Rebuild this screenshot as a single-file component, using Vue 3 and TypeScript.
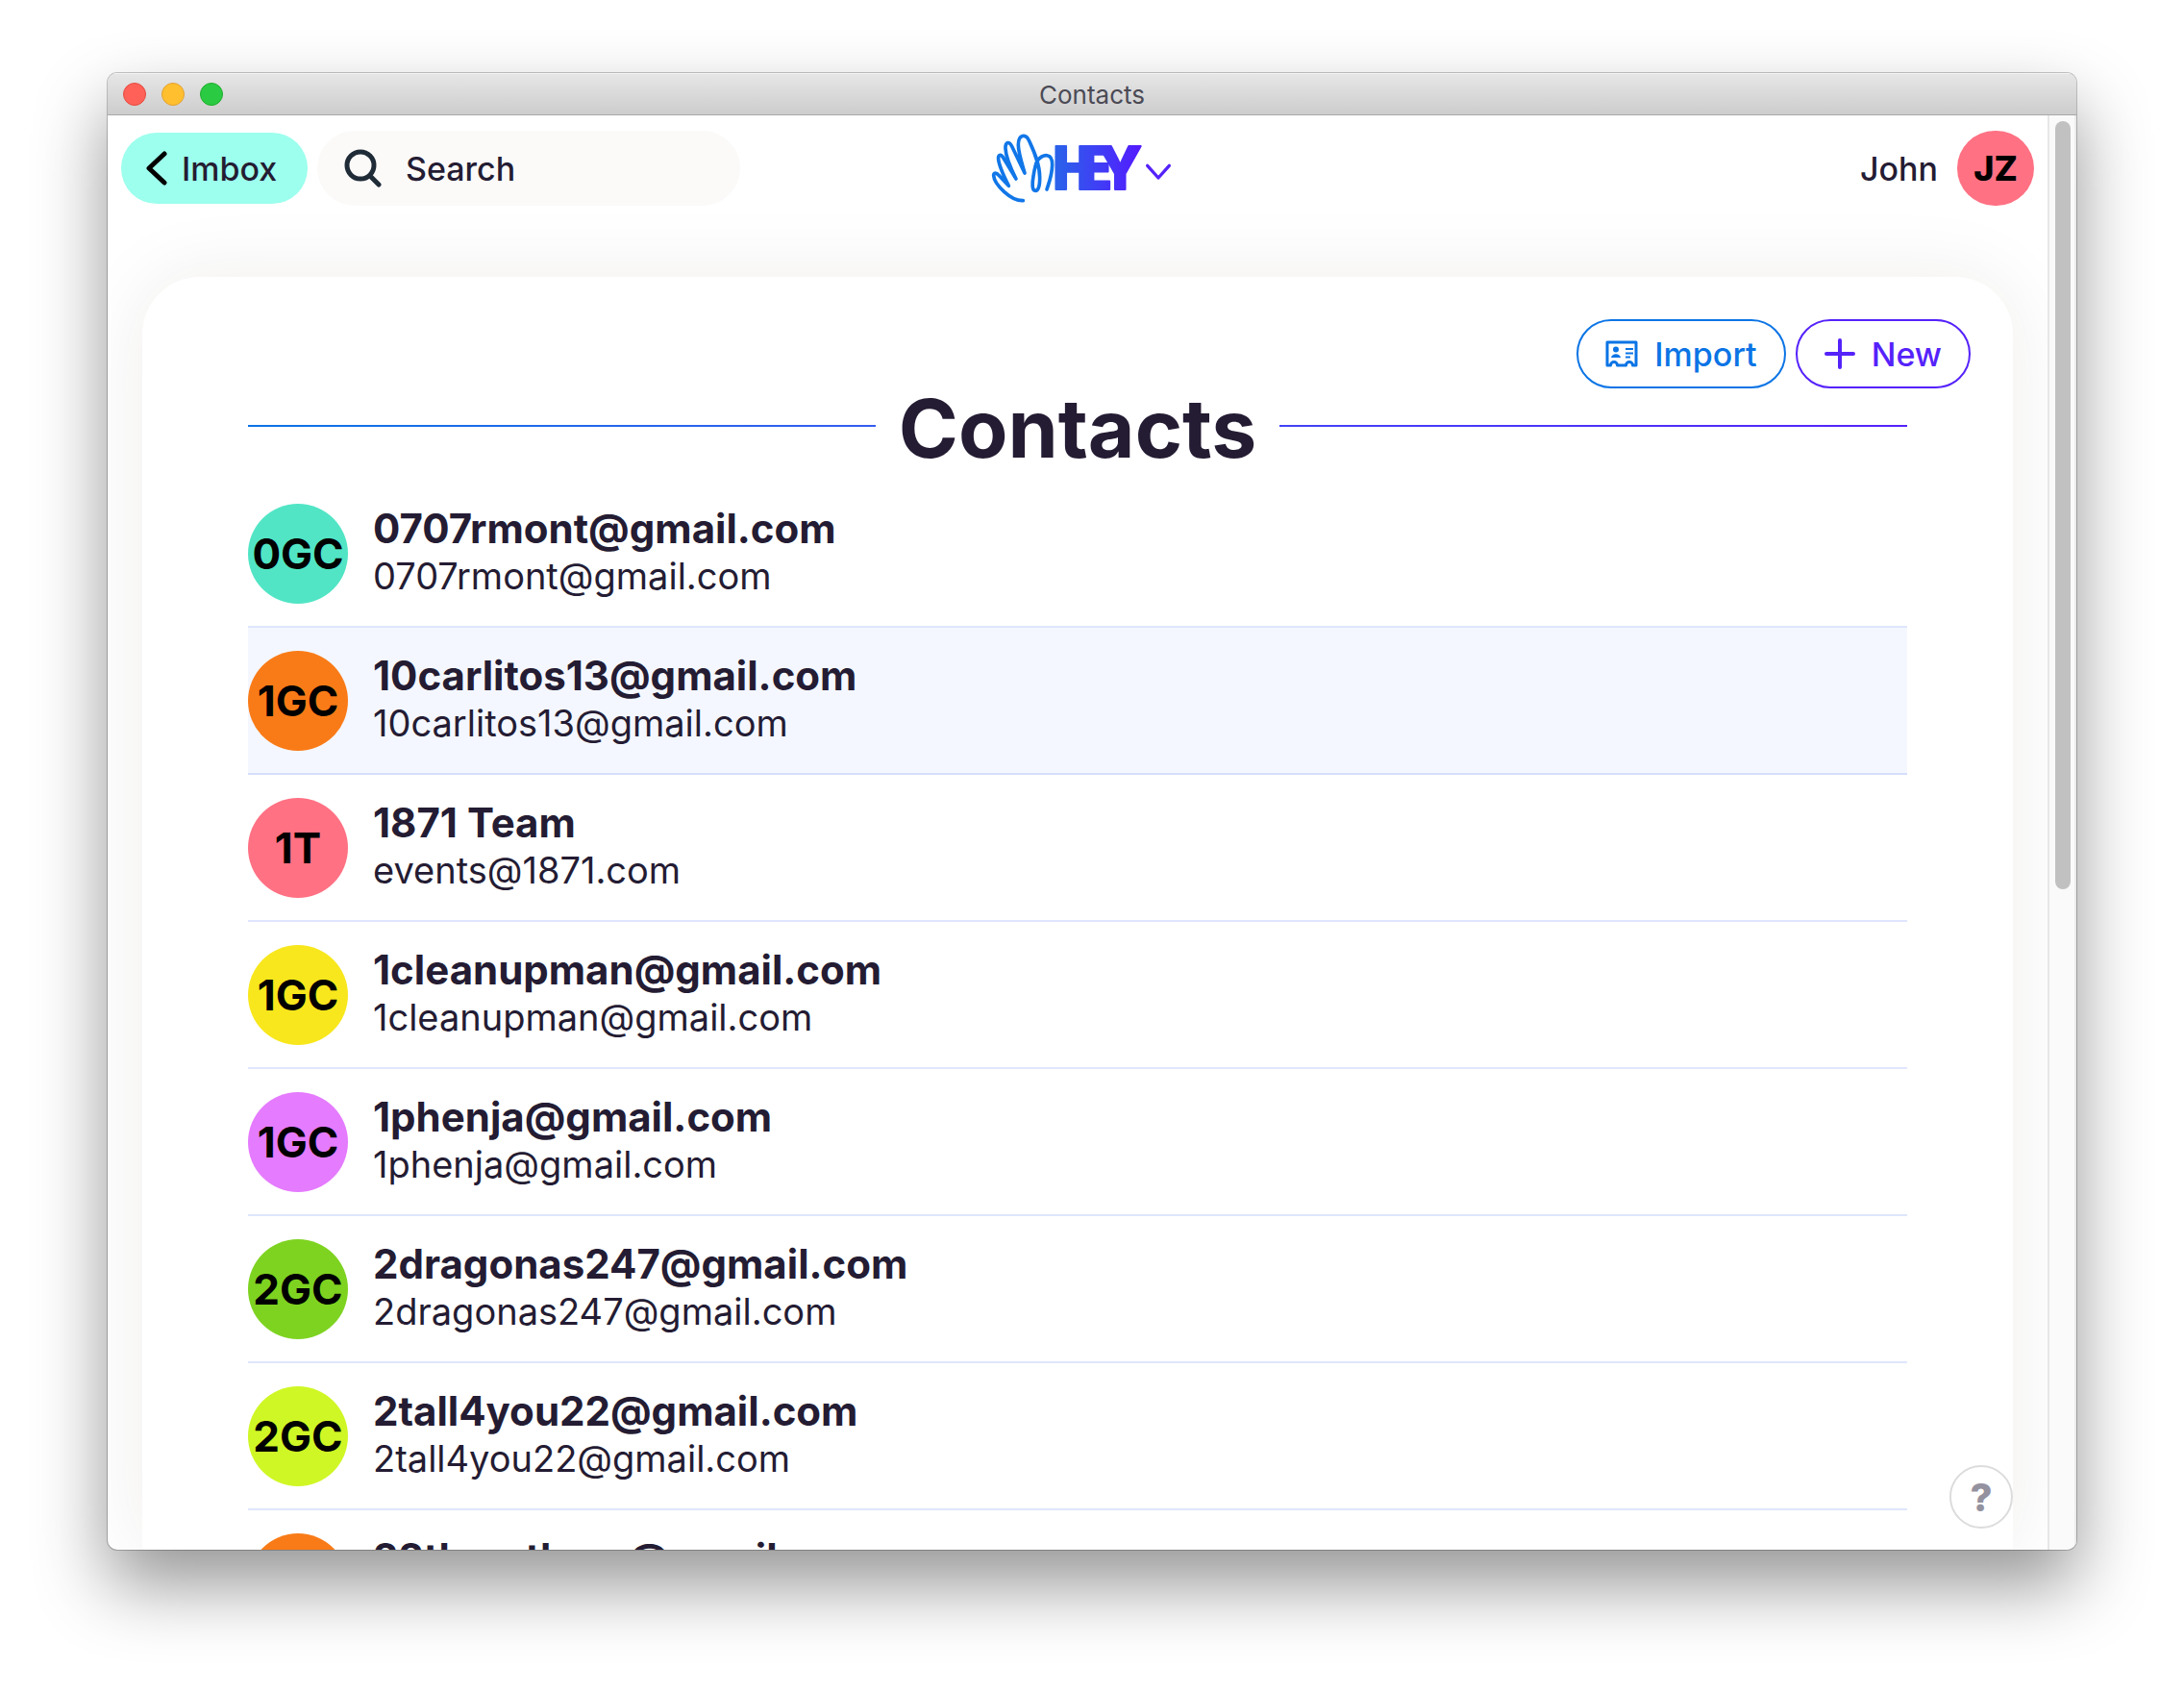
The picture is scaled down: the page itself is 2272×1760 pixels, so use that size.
<script setup lang="ts">
interface Contact {
  initials: string
  color: string
  name: string
  email: string
  active?: boolean
}

const contacts: Contact[] = [
  { initials: '0GC', color: '#51e5c5', name: '0707rmont@gmail.com', email: '0707rmont@gmail.com' },
  { initials: '1GC', color: '#f97b17', name: '10carlitos13@gmail.com', email: '10carlitos13@gmail.com', active: true },
  { initials: '1T', color: '#ff7183', name: '1871 Team', email: 'events@1871.com' },
  { initials: '1GC', color: '#f8e71c', name: '1cleanupman@gmail.com', email: '1cleanupman@gmail.com' },
  { initials: '1GC', color: '#e57bff', name: '1phenja@gmail.com', email: '1phenja@gmail.com' },
  { initials: '2GC', color: '#7ed321', name: '2dragonas247@gmail.com', email: '2dragonas247@gmail.com' },
  { initials: '2GC', color: '#cff725', name: '2tall4you22@gmail.com', email: '2tall4you22@gmail.com' },
  { initials: '2GC', color: '#f97b17', name: '22thmothers@gmail.com', email: '22thmothers@gmail.com' },
]
</script>

<template>
  <div class="desktop">
    <div class="window">
      <div class="titlebar">
        <div class="lights">
          <span class="light red"></span>
          <span class="light yellow"></span>
          <span class="light green"></span>
        </div>
        <span class="window-title">Contacts</span>
      </div>

      <div class="viewport">
        <div class="page">
          <header class="topbar">
            <div class="topbar-left">
              <a class="imbox" href="#">
                <svg width="24" height="36" viewBox="0 0 24 36" fill="none" stroke="#000" stroke-width="5" stroke-linecap="round" stroke-linejoin="round">
                  <path d="M20 3 4 18l16 15" />
                </svg>
                Imbox
              </a>
              <label class="search">
                <svg width="40" height="40" viewBox="0 0 40 40" fill="none" stroke="#1f2b37" stroke-width="5" stroke-linecap="round">
                  <circle cx="17" cy="17" r="14" />
                  <path d="m28 29 8 8" />
                </svg>
                <input type="text" placeholder="Search" aria-label="Search" />
              </label>
            </div>

            <button class="logo" type="button" aria-label="HEY menu">
              <svg width="190" height="74" viewBox="48 54 570 222" fill="none">
                <defs>
                  <linearGradient id="word" gradientUnits="userSpaceOnUse" x1="262" y1="0" x2="525" y2="0">
                    <stop offset="0" stop-color="#2a63ea" />
                    <stop offset="1" stop-color="#531cff" />
                  </linearGradient>
                </defs>
                <path
                  d="M163 266C125 268 73 215 71 188C70 178 80 178 87 187L118 220C103 190 88 155 86 138C84 122 94 120 101 132L141 198C124 165 109 125 108 104C107 82 120 80 128 97L168 180C158 145 148 115 148 92C148 60 171 55 182 80C195 108 215 150 215 195C215 225 209 235 202 235C190 235 191 212 195 190C199 165 201 152 207 142C225 120 255 115 254 155C253 190 243 212 237 231"
                  stroke="#1176e8" stroke-width="11" stroke-linecap="round" stroke-linejoin="round"
                />
                <text class="wordmark" x="255 329 396" y="232" fill="url(#word)" stroke="url(#word)" stroke-width="6" stroke-linejoin="round">HEY</text>
                <path d="m551 157 34 38 34-38" stroke="#5522fa" stroke-width="10" stroke-linecap="round" stroke-linejoin="round" />
              </svg>
            </button>

            <a class="account" href="#">
              John
              <span class="me">JZ</span>
            </a>
          </header>

          <main class="card">
            <div class="actions">
              <button class="pill import" type="button">
                <svg width="34" height="28" viewBox="0 0 34 28" fill="none" stroke="currentColor">
                  <path d="M2 2h30v24h-3.500a3.500 3.500 0 0 0-7 0h-9a3.500 3.500 0 0 0-7 0H2z" stroke-width="3" stroke-linejoin="round" />
                  <circle cx="11" cy="9.500" r="3" fill="currentColor" stroke="none" />
                  <path d="M6 18c1-5 9-5 10 0z" fill="currentColor" stroke="none" />
                  <path d="M21 9h8M21 13.500h8M21 17.500h5" stroke-width="2" />
                </svg>
                Import
              </button>
              <button class="pill new" type="button">
                <svg width="32" height="32" viewBox="0 0 32 32" fill="none" stroke="currentColor" stroke-width="4" stroke-linecap="round">
                  <path d="M16 2v28M2 16h28" />
                </svg>
                New
              </button>
            </div>

            <div class="heading">
              <span class="rule rule-start"></span>
              <h1>Contacts</h1>
              <span class="rule rule-end"></span>
            </div>

            <ul class="contacts">
              <li v-for="(c, i) in contacts" :key="i" :class="{ active: c.active }">
                <a class="contact" href="#">
                  <span class="avatar" :style="{ background: c.color }">{{ c.initials }}</span>
                  <span class="details">
                    <span class="name">{{ c.name }}</span>
                    <span class="email">{{ c.email }}</span>
                  </span>
                </a>
              </li>
            </ul>
          </main>

          <button class="help" type="button" aria-label="Help">?</button>
        </div>

        <div class="scrollbar"><div class="thumb"></div></div>
      </div>
    </div>
  </div>
</template>

<style>
body {
  margin: 0;
  background: #fff;
}
</style>

<style scoped>
.desktop {
  box-sizing: border-box;
  height: 100vh;
  padding: 76px 112px 148px;
  overflow: hidden;
  font-family: Inter, 'Liberation Sans', sans-serif;
  color: #241c33;
}

.desktop *,
.desktop *::before {
  box-sizing: border-box;
}

a {
  color: inherit;
  text-decoration: none;
}

button,
input {
  font: inherit;
  margin: 0;
}

.window {
  display: flex;
  flex-direction: column;
  height: 100%;
  border-radius: 10px;
  box-shadow: 0 0 0 1px rgba(0, 0, 0, 0.22), 0 36px 74px rgba(0, 0, 0, 0.42);
  overflow: hidden;
  background: #fff;
}

.titlebar {
  flex: none;
  display: grid;
  grid-template-columns: 1fr auto 1fr;
  align-items: center;
  height: 44px;
  padding: 0 16px;
  background: linear-gradient(#e6e6e6, #cdcdcd);
  border-top: 1px solid #f4f4f4;
  border-bottom: 1px solid #a8a8a8;
}

.lights {
  display: flex;
  gap: 16px;
}

.light {
  width: 24px;
  height: 24px;
  border-radius: 50%;
  border: 1px solid;
}

.red {
  background: #ff6158;
  border-color: #e24b41;
}

.yellow {
  background: #ffbf2f;
  border-color: #e1a033;
}

.green {
  background: #2acb42;
  border-color: #1fac2c;
}

.window-title {
  padding-top: 2px;
  font-size: 26px;
  line-height: 32px;
  color: #4b4a55;
}

.viewport {
  flex: 1;
  display: flex;
  min-height: 0;
}

.page {
  position: relative;
  flex: 1;
  display: flex;
  flex-direction: column;
  gap: 74px;
  padding: 16px 14px 0;
  overflow: hidden;
}

.topbar {
  flex: none;
  display: grid;
  grid-template-columns: 1fr auto 1fr;
  align-items: center;
  height: 78px;
  font-size: 34px;
  font-weight: 500;
}

.topbar-left {
  display: flex;
  align-items: center;
  gap: 10px;
}

.imbox {
  display: flex;
  align-items: center;
  gap: 14px;
  width: 194px;
  height: 74px;
  padding-left: 25px;
  border-radius: 37px;
  background: #9dffed;
}

.search {
  display: flex;
  align-items: center;
  gap: 24px;
  width: 440px;
  height: 78px;
  padding: 0 28px;
  border-radius: 39px;
  background: #fbfaf9;
}

.search input {
  flex: 1;
  min-width: 0;
  padding: 0;
  border: 0;
  outline: 0;
  background: none;
  color: inherit;
}

.search input::placeholder {
  color: #241c33;
  opacity: 1;
}

.logo {
  display: flex;
  padding: 0;
  border: 0;
  background: none;
}

.logo svg {
  overflow: visible;
}

.wordmark {
  font-size: 184px;
  font-weight: 800;
}

.account {
  justify-self: end;
  display: flex;
  align-items: center;
  gap: 20px;
}

.me {
  display: grid;
  place-items: center;
  width: 80px;
  height: 78px;
  border-radius: 39px;
  background: #ff7183;
  color: #000;
  font-size: 36px;
  font-weight: 800;
}

.card {
  flex: 1;
  min-height: 0;
  margin: 0 22px;
  padding: 44px 44px 0;
  border-radius: 60px 60px 0 0;
  background: #fff;
  box-shadow: 0 0 80px rgba(60, 40, 10, 0.08);
}

.actions {
  display: flex;
  justify-content: flex-end;
  gap: 10px;
}

.pill {
  display: flex;
  align-items: center;
  height: 72px;
  padding: 0 28px;
  gap: 17px;
  border: 2px solid;
  border-radius: 36px;
  background: none;
  font-size: 34px;
  font-weight: 500;
}

.import {
  color: #0b74e5;
}

.new {
  color: #5522fa;
}

.heading {
  display: flex;
  align-items: center;
  gap: 24px;
  height: 78px;
  padding: 0 66px;
}

.heading h1 {
  margin: 0;
  padding-top: 6px;
  font-size: 84px;
  line-height: 84px;
  font-weight: 700;
}

.rule {
  flex: 1;
  height: 2px;
}

.rule-start {
  background: linear-gradient(90deg, #0b74e5, #355cf0);
}

.rule-end {
  background: linear-gradient(90deg, #4343f6, #5522fa);
}

.contacts {
  list-style: none;
  margin: 18px 0 0;
  padding: 0 66px;
}

.contacts li {
  height: 153px;
  border-bottom: 2px solid #dfe6fd;
}

.contacts li.active {
  background: #f4f7ff;
  border-color: #d5dffa;
}

.contact {
  display: flex;
  align-items: center;
  gap: 26px;
  height: 100%;
}

.avatar {
  flex: none;
  display: grid;
  place-items: center;
  width: 104px;
  height: 104px;
  border-radius: 50%;
  color: #000;
  font-size: 44px;
  font-weight: 700;
}

.details {
  display: flex;
  flex-direction: column;
  padding-bottom: 4px;
}

.name {
  font-size: 42px;
  line-height: 50px;
  font-weight: 700;
}

.email {
  font-size: 38px;
  line-height: 48px;
}

.help {
  position: absolute;
  right: 36px;
  bottom: 22px;
  width: 66px;
  height: 66px;
  padding: 0;
  border: 2px solid #dcdcdd;
  border-radius: 50%;
  background: #fff;
  color: #94929f;
  font-size: 40px;
  font-weight: 800;
}

.scrollbar {
  flex: none;
  width: 30px;
  padding: 6px;
  border-left: 2px solid #e7e7e7;
  border-right: 2px solid #ececec;
  background: #fafafa;
}

.thumb {
  width: 16px;
  height: 54%;
  border-radius: 8px;
  background: #c1c1c1;
}
</style>
